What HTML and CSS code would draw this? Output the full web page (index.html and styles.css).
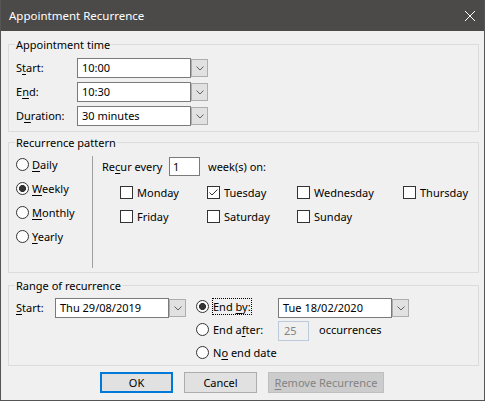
FILE: index.html
```html
<!DOCTYPE html>
<html lang="en">
<head>
  <meta charset="UTF-8">
  <title>Appointment Recurrence</title>
  <link rel="stylesheet" href="styles.css">
</head>
<body>

  <div class="window">
    <div class="titlebar">
      <span class="title">Appointment Recurrence</span>
      <svg class="close" width="10" height="10" viewBox="0 0 10 10"><path d="M0 0L10 10M10 0L0 10" stroke="#fff" stroke-width="1"/></svg>
    </div>

    <div class="dialog-body">

      <!-- Appointment time -->
      <fieldset class="group group-time">
        <legend>Appointment time</legend>
        <div class="time-grid">
          <span class="field-label">S<u>t</u>art:</span>
          <div class="combo">
            <span class="combo-value">10:00</span>
            <span class="combo-btn"><svg width="8" height="5" viewBox="0 0 8 5"><path d="M0.5 0.5L4 4L7.5 0.5" fill="none" stroke="#606060"/></svg></span>
          </div>
          <span class="field-label">E<u>n</u>d:</span>
          <div class="combo">
            <span class="combo-value">10:30</span>
            <span class="combo-btn"><svg width="8" height="5" viewBox="0 0 8 5"><path d="M0.5 0.5L4 4L7.5 0.5" fill="none" stroke="#606060"/></svg></span>
          </div>
          <span class="field-label">D<u>u</u>ration:</span>
          <div class="combo">
            <span class="combo-value">30 minutes</span>
            <span class="combo-btn"><svg width="8" height="5" viewBox="0 0 8 5"><path d="M0.5 0.5L4 4L7.5 0.5" fill="none" stroke="#606060"/></svg></span>
          </div>
        </div>
      </fieldset>

      <!-- Recurrence pattern -->
      <fieldset class="group group-pattern">
        <legend>Recurrence pattern</legend>
        <div class="pattern">
          <div class="freq">
            <div class="option"><span class="radio"></span><span><u>D</u>aily</span></div>
            <div class="option"><span class="radio on"></span><span><u>W</u>eekly</span></div>
            <div class="option"><span class="radio"></span><span><u>M</u>onthly</span></div>
            <div class="option"><span class="radio"></span><span><u>Y</u>early</span></div>
          </div>
          <div class="weekly">
            <div class="recur-row">
              <span class="recur-label">Re<u>c</u>ur every</span>
              <span class="textbox">1</span>
              <span>week(s) on:</span>
            </div>
            <div class="days">
              <div class="check"><span class="checkbox"></span><span>Monday</span></div>
              <div class="check"><span class="checkbox"><svg width="11" height="11" viewBox="0 0 11 11"><path d="M1.5 5.5L4 8L9.5 2.5" fill="none" stroke="#333"/></svg></span><span>Tuesday</span></div>
              <div class="check"><span class="checkbox"></span><span>Wednesday</span></div>
              <div class="check"><span class="checkbox"></span><span>Thursday</span></div>
              <div class="check"><span class="checkbox"></span><span>Friday</span></div>
              <div class="check"><span class="checkbox"></span><span>Saturday</span></div>
              <div class="check"><span class="checkbox"></span><span>Sunday</span></div>
            </div>
          </div>
        </div>
      </fieldset>

      <!-- Range of recurrence -->
      <fieldset class="group group-range">
        <legend>Range of recurrence</legend>
        <div class="range">
          <span class="field-label range-label"><u>S</u>tart:</span>
          <div class="combo range-combo">
            <span class="combo-value">Thu 29/08/2019</span>
            <span class="combo-btn"><svg width="8" height="5" viewBox="0 0 8 5"><path d="M0.5 0.5L4 4L7.5 0.5" fill="none" stroke="#606060"/></svg></span>
          </div>
          <div class="option"><span class="radio on"></span><span class="opt-text focus">End <u>b</u>y:</span></div>
          <div class="combo range-combo">
            <span class="combo-value">Tue 18/02/2020</span>
            <span class="combo-btn"><svg width="8" height="5" viewBox="0 0 8 5"><path d="M0.5 0.5L4 4L7.5 0.5" fill="none" stroke="#606060"/></svg></span>
          </div>

          <div class="option col-3"><span class="radio"></span><span class="opt-text">End a<u>f</u>ter:</span></div>
          <div class="occurrences">
            <span class="textbox disabled">25</span>
            <span>occurrences</span>
          </div>

          <div class="option col-3 span-2"><span class="radio"></span><span class="opt-text">N<u>o</u> end date</span></div>
        </div>
      </fieldset>

      <div class="buttons">
        <button class="btn btn-default">OK</button>
        <button class="btn">Cancel</button>
        <button class="btn btn-disabled"><span><u>R</u>emove Recurrence</span></button>
      </div>

    </div>
  </div>

</body>
</html>
```

FILE: styles.css
```css
body {
  margin: 0;
  background: #f0f0f0;
}

.window {
  width: 485px;
  height: 401px;
  box-sizing: border-box;
  border: 1px solid #555;
  border-top: 0;
  background: #f0f0f0;
  font-family: "Segoe UI", "Noto Sans", sans-serif;
  font-size: 11px;
  color: #000;
  overflow: hidden;
}

u {
  text-underline-offset: 2px;
}

/* Title bar */
.titlebar {
  height: 31px;
  background: #4c4a48;
  color: #fff;
  display: flex;
  align-items: center;
  justify-content: space-between;
  padding: 0 9px 0 8px;
}

.title {
  font-size: 11.5px;
}

.close {
  display: block;
}

/* Body */
.dialog-body {
  padding: 0 5px 0 7px;
}

.group {
  margin: 0;
  padding: 0;
  border: 1px solid #dcdcdc;
  min-width: 0;
  box-sizing: border-box;
}

.group legend {
  margin-left: 6px;
  padding: 0 1px;
  line-height: 17px;
}

.group-time {
  margin-top: 5px;
  height: 96px;
}

.group-pattern {
  margin-top: 2px;
  height: 139px;
}

.group-range {
  margin-top: 4px;
  height: 89px;
}

/* Appointment time */
.time-grid {
  display: grid;
  grid-template-columns: 61px auto;
  row-gap: 4px;
  align-items: center;
  padding: 5px 0 0 7px;
}

.field-label {
  line-height: 20px;
}

.combo {
  display: flex;
  align-items: center;
  height: 20px;
}

.combo-value {
  box-sizing: border-box;
  width: 114px;
  height: 20px;
  border: 1px solid #7a7a7a;
  background: #fff;
  padding-left: 4px;
  line-height: 18px;
  white-space: nowrap;
}

.combo-btn {
  box-sizing: border-box;
  width: 17px;
  height: 18px;
  border: 1px solid #adadad;
  background: #e1e1e1;
  display: flex;
  align-items: center;
  justify-content: center;
}

.combo-btn svg {
  display: block;
}

/* Radios and checkboxes */
.option {
  display: flex;
  align-items: center;
  gap: 3px;
  white-space: nowrap;
}

.radio {
  box-sizing: border-box;
  width: 13px;
  height: 13px;
  border: 1px solid #333;
  border-radius: 50%;
  background: #fff;
  flex: none;
}

.radio.on {
  background: radial-gradient(circle, #333 0 3.2px, #fff 3.8px);
}

.check {
  display: flex;
  align-items: center;
  gap: 4px;
  white-space: nowrap;
}

.checkbox {
  box-sizing: border-box;
  width: 13px;
  height: 13px;
  border: 1px solid #333;
  background: #fff;
  flex: none;
}

.checkbox svg {
  display: block;
}

.textbox {
  box-sizing: border-box;
  width: 31px;
  height: 19px;
  border: 1px solid #7a7a7a;
  background: #fff;
  padding-left: 4px;
  line-height: 17px;
}

.textbox.disabled {
  height: 20px;
  line-height: 18px;
  border-color: #bccbdb;
  background: #f0f0f0;
  color: #838383;
  padding-left: 5px;
}

/* Recurrence pattern */
.pattern {
  display: flex;
  align-items: flex-start;
  padding: 1px 0 0 7px;
}

.freq {
  width: 76px;
  display: flex;
  flex-direction: column;
}

.freq .option {
  height: 24px;
}

.weekly {
  margin-top: 4px;
  height: 112px;
  border-left: 1px solid #a0a0a0;
  padding-left: 9px;
  flex: 1;
}

.recur-row {
  display: flex;
  align-items: center;
  height: 19px;
  margin-top: 1px;
}

.recur-label {
  width: 67px;
}

.recur-row .textbox {
  margin-right: 8px;
  padding-left: 3px;
}

.days {
  display: grid;
  grid-template-columns: 87px 90px 106px auto;
  grid-auto-rows: 24px;
  align-items: center;
  margin: 4px 0 0 18px;
}

/* Range of recurrence */
.range {
  display: grid;
  grid-template-columns: 39px 141px 82px auto;
  grid-template-rows: 23px 23px 23px;
  align-items: center;
  padding: 1px 0 0 7px;
}

.range-label,
.range-combo {
  align-self: end;
}

.opt-text {
  border: 1px solid transparent;
  line-height: 15px;
}

.opt-text.focus {
  border: 1px dotted #000;
}

.col-3 {
  grid-column: 3;
}

.span-2 {
  grid-column: 3 / span 2;
}

.occurrences {
  align-self: end;
  display: flex;
  align-items: center;
  gap: 10px;
}

.occurrences span:last-child {
  margin-top: -3px;
}

/* Buttons */
.buttons {
  display: flex;
  gap: 11px;
  margin-top: 6px;
  padding-left: 92px;
}

.btn {
  box-sizing: border-box;
  width: 73px;
  height: 21px;
  padding: 0;
  border: 1px solid #adadad;
  background: #e1e1e1;
  font: inherit;
  color: #000;
  display: flex;
  align-items: center;
  justify-content: center;
}

.btn-default {
  border: 2px solid #0078d7;
}

.btn-disabled {
  width: 116px;
  background: #cccccc;
  border-color: #bfbfbf;
  color: #838383;
}
```
